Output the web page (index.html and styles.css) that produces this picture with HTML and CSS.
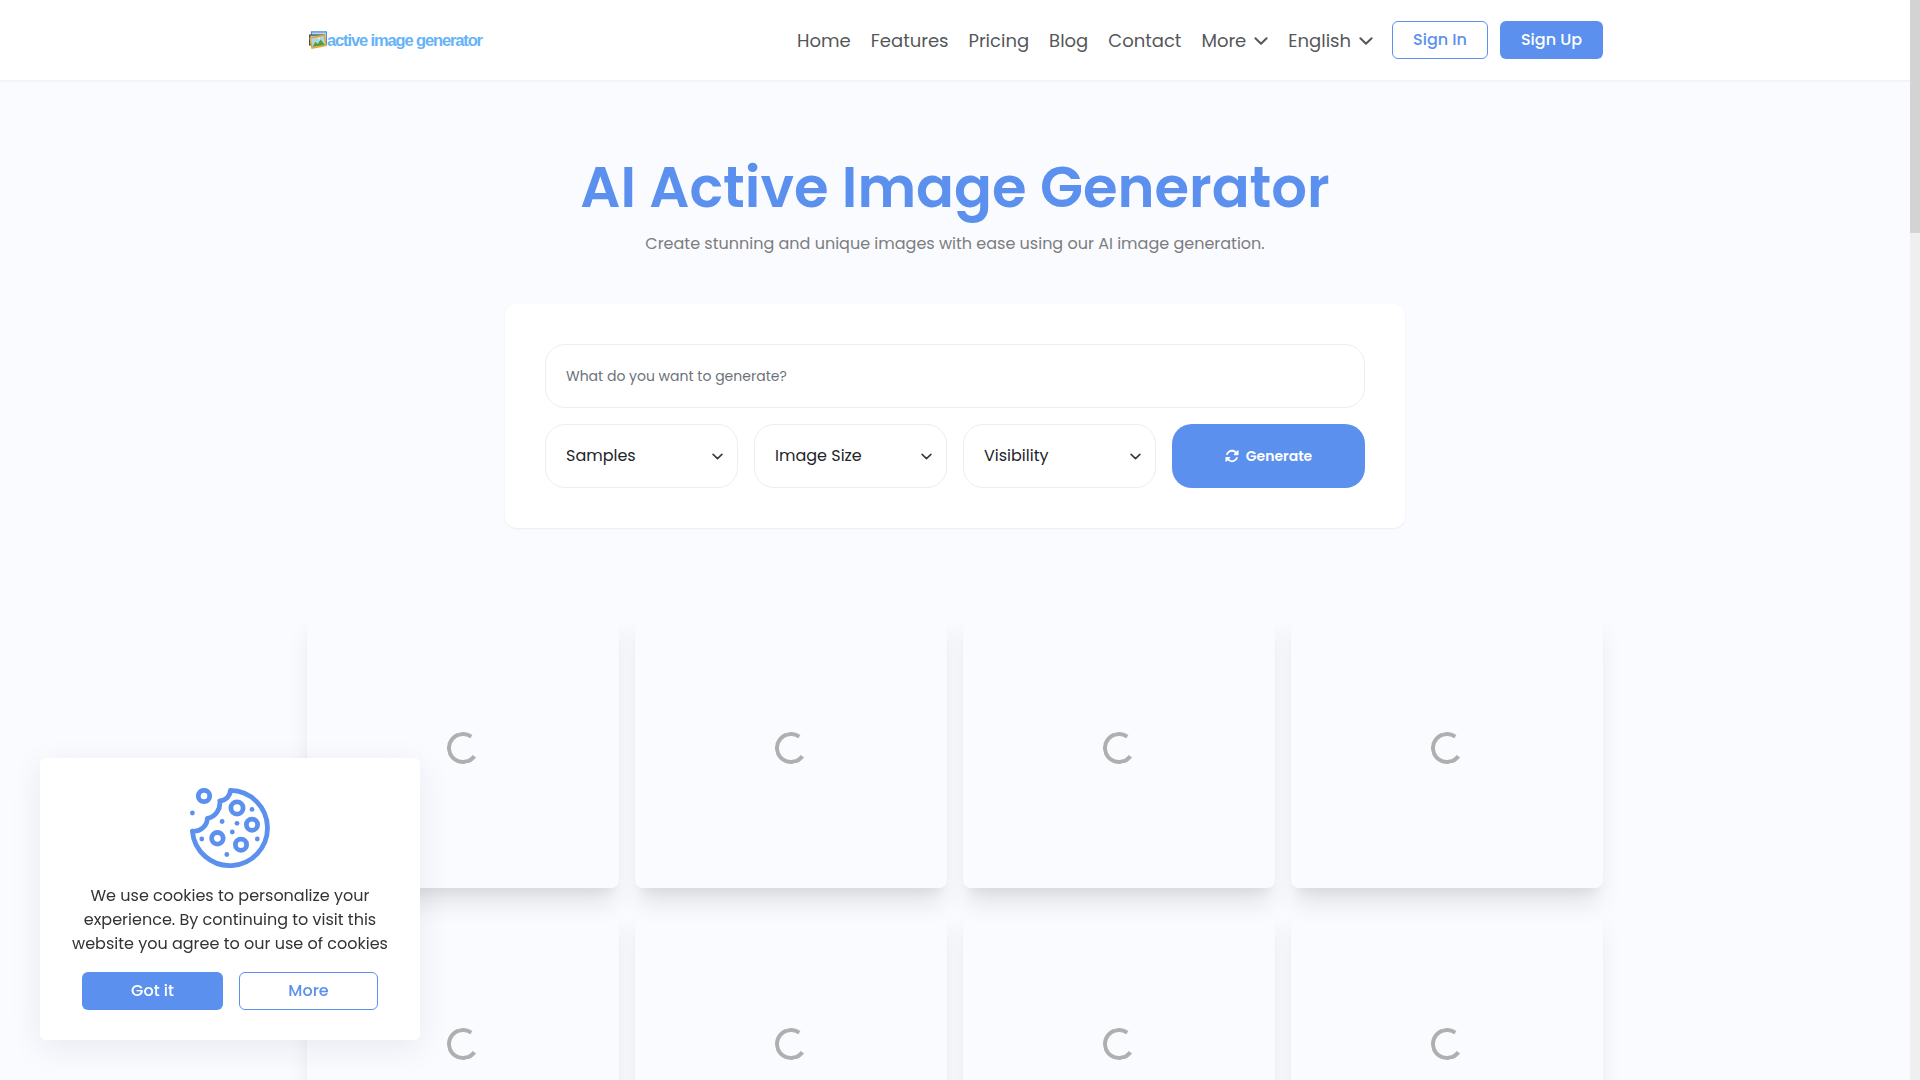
FILE: index.html
```html
<!DOCTYPE html>
<html lang="en">
<head>
<meta charset="utf-8">
<title>AI Active Image Generator</title>
<link rel="stylesheet" href="styles.css">
</head>
<body>
<svg class="defs" aria-hidden="true">
  <symbol id="chevron" viewBox="0 0 14 8"><path d="M1.4 1.3 7 6.7l5.6-5.4" fill="none" stroke="currentColor" stroke-width="2" stroke-linecap="round" stroke-linejoin="round"/></symbol>
</svg>
<div class="page">
  <header class="header">
    <div class="container header-inner">
      <a class="logo">
        <svg class="logo-icon" viewBox="0 0 18 18">
          <path d="M2.5.8h15v12.5h-15z" fill="#b9d9f3" stroke="#4f8bd6" stroke-width="1.2"/>
          <path d="M.7 4h14.5v10H.7z" fill="#9fcbd8" stroke="#34383f" stroke-width="1.2"/>
          <path d="m1.2 7 14-2.8 1.9 10.2L3 17.2z" fill="#a8d8e4" stroke="#eaa52c" stroke-width="1.4"/>
          <path d="m3.5 15.8 3-5 2.2 2.2 3-4.4 4.2 5.3z" fill="#5c9a34"/>
          <circle cx="10" cy="7.6" r="1" fill="#f4f0c0"/>
        </svg>
        <span class="logo-text">active image generator</span>
      </a>
      <nav class="nav">
        <a>Home</a>
        <a>Features</a>
        <a>Pricing</a>
        <a>Blog</a>
        <a>Contact</a>
        <a>More <svg class="caret"><use href="#chevron"/></svg></a>
        <a>English <svg class="caret"><use href="#chevron"/></svg></a>
      </nav>
      <div class="auth">
        <button class="btn btn-outline sign-in">Sign In</button>
        <button class="btn btn-primary sign-up">Sign Up</button>
      </div>
    </div>
  </header>

  <section class="hero">
    <h1>AI Active Image Generator</h1>
    <p>Create stunning and unique images with ease using our AI image generation.</p>
    <form class="generator">
      <div class="field prompt">What do you want to generate?</div>
      <div class="options">
        <div class="field select"><span>Samples</span><svg><use href="#chevron"/></svg></div>
        <div class="field select"><span>Image Size</span><svg><use href="#chevron"/></svg></div>
        <div class="field select"><span>Visibility</span><svg><use href="#chevron"/></svg></div>
        <button type="button" class="generate">
          <svg viewBox="0 0 512 512" fill="currentColor"><path d="M142.9 142.9c62.2-62.2 162.7-62.5 225.3-1L327 183c-6.9 6.9-8.9 17.2-5.2 26.2s12.5 14.8 22.2 14.8H472c13.3 0 24-10.7 24-24V72c0-9.7-5.8-18.5-14.8-22.2s-19.3-1.7-26.2 5.2L413.4 96.6c-87.6-86.5-228.7-86.2-315.8 1C73.2 122 55.6 150.7 44.8 181.4c-5.9 16.7 2.9 34.9 19.5 40.8s34.9-2.9 40.8-19.5c7.7-21.8 20.2-42.3 37.8-59.8zM16 312V440c0 9.7 5.8 18.5 14.8 22.2s19.3 1.7 26.2-5.2l41.6-41.6c87.6 86.5 228.7 86.2 315.8-1c24.4-24.4 42.1-53.1 52.9-83.7c5.9-16.7-2.9-34.9-19.5-40.8s-34.9 2.9-40.8 19.5c-7.7 21.8-20.2 42.3-37.8 59.8c-62.2 62.2-162.7 62.5-225.3 1L185 329c6.9-6.9 8.9-17.2 5.2-26.2s-12.5-14.8-22.2-14.8H40c-13.3 0-24 10.7-24 24z"/></svg>
          <span>Generate</span>
        </button>
      </div>
    </form>
  </section>

  <section class="container gallery">
    <div class="card"><i class="spinner"></i></div>
    <div class="card"><i class="spinner"></i></div>
    <div class="card"><i class="spinner"></i></div>
    <div class="card"><i class="spinner"></i></div>
    <div class="card"><i class="spinner"></i></div>
    <div class="card"><i class="spinner"></i></div>
    <div class="card"><i class="spinner"></i></div>
    <div class="card"><i class="spinner"></i></div>
  </section>
</div>

<aside class="cookies">
  <svg class="cookie-icon" viewBox="0 0 80 80">
    <g fill="none" stroke="currentColor" stroke-width="4.8" stroke-linejoin="round">
      <path d="M40.4 2.4A37.6 37.6 0 1 1 2.4 43.2A13.6 13.6 0 0 0 17.4 30.4A15.8 15.8 0 0 0 29.8 12.8A10.8 10.8 0 0 0 40.4 2.4Z"/>
      <circle cx="14" cy="8" r="5.7"/>
      <circle cx="47" cy="20" r="6.1"/>
      <circle cx="62" cy="36.7" r="5.6"/>
      <circle cx="27.4" cy="50.3" r="5.8"/>
      <circle cx="51" cy="56.7" r="5.6"/>
    </g>
    <g fill="currentColor">
      <circle cx="2.4" cy="25" r="2.4"/><circle cx="62" cy="21.4" r="2.4"/><circle cx="32.1" cy="33.5" r="2.4"/><circle cx="47" cy="35.3" r="2.4"/><circle cx="42.3" cy="44" r="2.4"/><circle cx="11.8" cy="51" r="2.4"/><circle cx="67.3" cy="51" r="2.4"/><circle cx="36.8" cy="66.5" r="2.4"/>
    </g>
  </svg>
  <p>We use cookies to personalize your<br>experience. By continuing to visit this<br>website you agree to our use of cookies</p>
  <div class="cookie-actions">
    <button class="btn btn-primary">Got it</button>
    <button class="btn btn-outline">More</button>
  </div>
</aside>
<div class="scrollbar"><div class="thumb"></div></div>
</body>
</html>
```
FILE: styles.css
```css
* { box-sizing: border-box; }
body {
  margin: 0;
  height: 1080px;
  overflow: hidden;
  background: #fafbff;
  font-family: Poppins, Inter, sans-serif;
  font-size: 16px;
  color: #212529;
}
h1, p { margin: 0; }
button { font: inherit; padding: 0; border: 0; }
.defs { display: none; }
.page { width: 1910px; height: 1080px; overflow: hidden; }
.container { width: 1296px; margin: 0 auto; }

.header { height: 80px; background: #fff; box-shadow: 0 1px 2px rgba(40, 45, 80, .07); }
.header-inner { display: flex; align-items: center; height: 100%; }
.logo { display: flex; align-items: center; flex: 1; padding-left: 2px; }
.logo-icon { width: 18px; height: 18px; flex: none; }
.logo-text {
  font: bold 16.5px/18px "Liberation Sans", Arial, sans-serif;
  letter-spacing: -1.13px;
  color: #66b3f8;
  margin: -1px 0 0;
  white-space: nowrap;
}
.nav {
  display: flex;
  gap: 20px;
  font-size: 18px;
  line-height: 24px;
  color: #555759;
  margin: 1px 19px 0 0;
}
.nav a { display: flex; align-items: center; white-space: nowrap; }
.caret { width: 14px; height: 8px; margin-left: 8px; }
.auth { display: flex; gap: 12px; }
.btn { height: 38px; border-radius: 6px; font-weight: 500; padding-bottom: 1px; }
.btn-primary { background: #5b90ee; color: #fff; }
.btn-outline { background: #fff; color: #5b90ee; border: 1px solid #5b90ee; }
.sign-in { width: 96px; }
.sign-up { width: 103px; }

.hero { display: flex; flex-direction: column; align-items: center; padding-top: 73px; }
.hero h1 { font-size: 56px; line-height: 70px; font-weight: 600; color: #5b90ee; }
.hero p { margin-top: 9px; line-height: 24px; color: #7c7d80; }
.generator {
  width: 900px;
  margin-top: 48px;
  padding: 40px;
  background: #fff;
  border-radius: 12px;
  box-shadow: 0 1px 2px rgba(40, 45, 80, .07);
}
.field { height: 64px; border: 1px solid #ededee; border-radius: 20px; display: flex; align-items: center; padding: 0 14px 0 20px; }
.prompt { font-size: 14px; color: #6c727a; }
.options { display: grid; grid-template-columns: repeat(4, 1fr); gap: 16px; margin-top: 16px; }
.select { justify-content: space-between; padding-bottom: 1px; }
.select svg { width: 11px; height: 7px; color: #343a40; margin-top: 1px; }
.generate {
  display: flex;
  align-items: center;
  justify-content: center;
  gap: 7px;
  border-radius: 20px;
  background: #5b90ee;
  color: #fff;
  font-size: 14px;
  font-weight: 600;
}
.generate svg { width: 14px; height: 14px; }

.gallery { display: grid; grid-template-columns: repeat(4, 1fr); grid-auto-rows: 280px; gap: 16px; padding-top: 80px; }
.card {
  display: flex;
  align-items: center;
  justify-content: center;
  border-radius: 8px;
  box-shadow: 0 20px 25px -5px rgba(0, 0, 0, .1), 0 10px 10px -5px rgba(0, 0, 0, .04);
}
.spinner { width: 32px; height: 32px; border: 4px solid #aeafae; border-right-color: transparent; border-radius: 50%; transform: rotate(-9deg); }

.cookies {
  position: fixed;
  left: 40px;
  bottom: 40px;
  width: 380px;
  height: 282px;
  display: flex;
  flex-direction: column;
  align-items: center;
  padding-top: 30px;
  background: #fff;
  border-radius: 6px;
  box-shadow: 0 8px 32px rgba(30, 35, 60, .08);
}
.cookie-icon { width: 80px; height: 80px; color: #5b90ee; }
.cookies p { margin-top: 16px; line-height: 24px; text-align: center; color: #333; white-space: nowrap; }
.cookie-actions { display: grid; grid-template-columns: 141px 139px; gap: 16px; margin-top: 16px; }

.scrollbar { position: fixed; top: 0; right: 0; width: 10px; height: 100%; background: #efefef; }
.thumb { height: 233px; background: #d3d3d4; }
```
